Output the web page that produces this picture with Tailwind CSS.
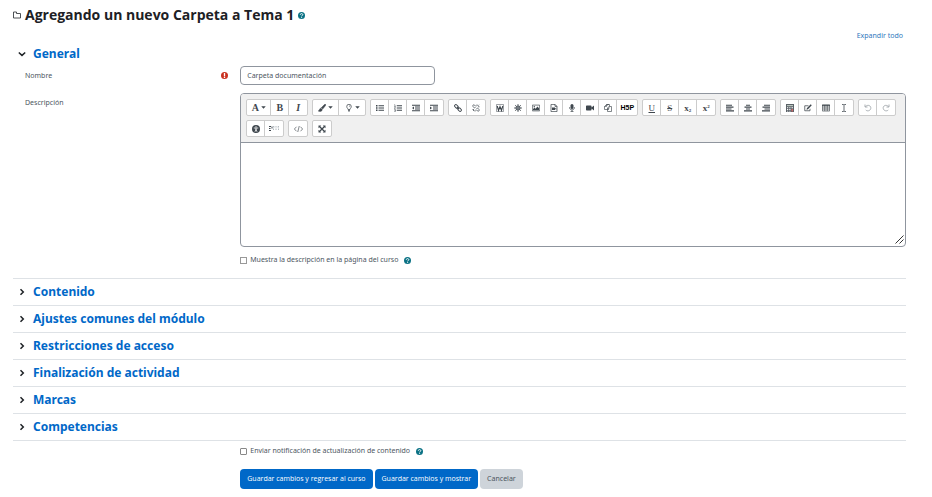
<!DOCTYPE html>
<html lang="es">
<head>
<meta charset="utf-8">
<title>Agregando un nuevo Carpeta a Tema 1</title>
<script src="https://cdn.jsdelivr.net/npm/@tailwindcss/browser@4"></script>
</head>
<body class="bg-white font-['Noto_Sans','Open_Sans',sans-serif] text-[7px] leading-3 text-[#4c5661]">
<svg class="hidden">
  <symbol id="help" viewBox="0 0 16 16"><circle cx="8" cy="8" r="8" fill="#0b7285"/><path d="M5.2 6.2C5.2 2.8 11 2.8 11 6.2 11 8.2 8.2 8 8.2 10" fill="none" stroke="#fff" stroke-width="2.2"/><path d="M7 11.2h2.4v2.2H7z" fill="#fff"/></symbol>
  <symbol id="right" viewBox="0 0 8 8"><path d="M2.5 1.2 5.3 4 2.5 6.8" fill="none" stroke="#1d2125" stroke-width="1.5"/></symbol>
  <symbol id="down" viewBox="0 0 8 8"><path d="M.8 2.5 4 5.4 7.2 2.5" fill="none" stroke="#1d2125" stroke-width="1.5"/></symbol>
  <symbol id="caret" viewBox="0 0 6 4"><path d="M0 .3h6L3 3.7z" fill="currentColor"/></symbol>
  <symbol id="brush" viewBox="0 0 16 16"><path d="M15 .5c1 .8.8 1.700 0 2.700L9.500 10 6.500 7.500 13 1C13.700.3 14.400 0 15 .5zM5.500 8.500l3 2.500c0 4-4.500 5-8 3 2.500-.5 2-5 5-5.500z" fill="currentColor" stroke="currentColor"/></symbol>
  <symbol id="bulb" viewBox="0 0 16 16"><path d="M6 11C6 9 3.500 8 3.500 5a4.500 4.500 0 0 1 9 0c0 3-2.500 4-2.500 6zM6 13h4M7 15h2M8 3.500c1 0 1.500.5 1.500 1.500" fill="none" stroke="currentColor" stroke-width="1.500"/></symbol>
  <symbol id="ul" viewBox="0 0 16 16"><path d="M0 2h3v3H0zM0 6.500h3v3H0zM0 11h3v3H0zM5 2.500h11v2H5zM5 7h11v2H5zM5 11.500h11v2H5z" fill="currentColor"/></symbol>
  <symbol id="ol" viewBox="0 0 16 16"><path d="M5.500 2.500H16v2H5.500zM5.500 7H16v2H5.500zM5.500 11.500H16v2H5.500z" fill="currentColor"/><path d="M.5 1.500H2V5M.5 5h3M.5 6.700h2.300L.8 9.300h2.500M.5 11h2.400v4H.5M1 13h2" fill="none" stroke="currentColor"/></symbol>
  <symbol id="indent" viewBox="0 0 16 16"><path d="M0 1.500h16v2H0zM6 5.200h10v2H6zM6 8.900h10v2H6zM0 12.600h16v2H0zM0 5l4 3-4 3z" fill="currentColor"/></symbol>
  <symbol id="outdent" viewBox="0 0 16 16"><path d="M0 1.500h16v2H0zM6 5.200h10v2H6zM6 8.900h10v2H6zM0 12.600h16v2H0zM4 5 0 8l4 3z" fill="currentColor"/></symbol>
  <symbol id="link" viewBox="0 0 16 16"><g fill="none" stroke="currentColor" stroke-width="2" transform="rotate(45 8 8)"><rect x="-.5" y="5.500" width="8" height="5" rx="2.500"/><rect x="8.500" y="5.500" width="8" height="5" rx="2.500"/><path d="M5 8h6"/></g></symbol>
  <symbol id="unlink" viewBox="0 0 16 16"><g fill="none" stroke="currentColor" stroke-width="1.500"><path d="m8 5-3-3C3 .5.500 3 2 5l3 3 2-1M8 11l3 3c2 1.500 4.500-1 3-3l-3-3-2 1M10 1v3M12 5.500h3M1 11h3M6 12v3M12 3.500l2-2M2 14l2-2"/></g></symbol>
  <symbol id="word" viewBox="0 0 16 16"><path d="M1 1h14v14H1z" fill="none" stroke="currentColor"/><path d="m2.500 4 2.500 9 3-8 3 8 2.500-9" fill="none" stroke="currentColor" stroke-width="2.200"/></symbol>
  <symbol id="burst" viewBox="0 0 16 16"><path d="M8 0v16M0 8h16M2.300 2.300l11.400 11.400M13.700 2.300 2.300 13.700" stroke="currentColor" stroke-width="1.600"/><circle cx="8" cy="8" r="4.500" fill="#777e84" stroke="currentColor"/></symbol>
  <symbol id="image" viewBox="0 0 16 16"><path d="M.7 2.200h14.600v11.600H.7z" fill="none" stroke="currentColor" stroke-width="1.400"/><circle cx="4.500" cy="5.500" r="1.500" fill="currentColor"/><path d="M2 12.500V10l3-2.500 2 2L11 5l3 3.500v4z" fill="currentColor"/></symbol>
  <symbol id="file" viewBox="0 0 16 16"><path d="M2 .8h8l4 4v10.400H2zM10 .8v4h4" fill="none" stroke="currentColor" stroke-width="1.500"/><path d="M4 7h6v5H4zM10 9.500 12.500 7v5z" fill="currentColor"/></symbol>
  <symbol id="mic" viewBox="0 0 16 16"><rect x="5" y="0" width="6" height="10" rx="3" fill="currentColor"/><path d="M3 6.500c0 7 10 7 10 0M8 12v3M5 15.200h6" fill="none" stroke="currentColor" stroke-width="1.500"/></symbol>
  <symbol id="video" viewBox="0 0 16 16"><path d="M0 4.500A1.500 1.500 0 0 1 1.500 3h8A1.500 1.500 0 0 1 11 4.500v7A1.500 1.500 0 0 1 9.500 13h-8A1.500 1.500 0 0 1 0 11.500zM11 7l5-4v10l-5-4z" fill="currentColor"/></symbol>
  <symbol id="copy" viewBox="0 0 16 16"><path d="M6 4V1h5v3M10 11H1V5l4-4h5M5 1v4H1M7 15V8l3-3h5v10zM10 5v4H7" fill="none" stroke="currentColor" stroke-width="1.300"/></symbol>
  <symbol id="aleft" viewBox="0 0 16 16"><path d="M0 1.500h12v2.200H0zM0 5.200h15v2.200H0zM0 8.900h11v2.200H0zM0 12.600h16v2.200H0z" fill="currentColor"/></symbol>
  <symbol id="acenter" viewBox="0 0 16 16"><path d="M4 1.500h8v2.200H4zM1 5.200h14v2.200H1zM4 8.900h8v2.200H4zM0 12.600h16v2.200H0z" fill="currentColor"/></symbol>
  <symbol id="aright" viewBox="0 0 16 16"><path d="M4 1.500h12v2.200H4zM1 5.200h15v2.200H1zM5 8.900h11v2.200H5zM0 12.600h16v2.200H0z" fill="currentColor"/></symbol>
  <symbol id="calc" viewBox="0 0 16 16"><path d="M0 0h16v16H0z" fill="#5b6268"/><path d="M2 2h12v2.500H2z" fill="#b9c4bd"/><path d="M2 6.500h2.500v2H2zM6.500 6.500H9v2H6.500zM11 6.500h3v2h-3zM2 10h2.500v2H2zM6.500 10H9v2H6.500zM2 13.500h2.500v1.500H2zM6.500 13.500H9v1.500H6.500z" fill="#fff"/><path d="M11 10h3v5h-3z" fill="#c66"/></symbol>
  <symbol id="edit" viewBox="0 0 16 16"><path d="M12 9.500v4H1.500v-10H9" fill="none" stroke="currentColor" stroke-width="1.500"/><path d="m13.500.5 2 2-7.500 8L5 11.500l.7-3z" fill="currentColor"/></symbol>
  <symbol id="table" viewBox="0 0 16 16"><path d="M.7 2h14.600v12H.7zM.7 6h14.600M.7 10h14.600M5.500 2v12M10.500 2v12" fill="none" stroke="currentColor" stroke-width="1.400"/><path d="M0 1.500h16v2H0z" fill="currentColor"/></symbol>
  <symbol id="ibeam" viewBox="0 0 16 16"><path d="M4 1h3l1 1 1-1h3M8 2v12M4 15h3l1-1 1 1h3" fill="none" stroke="currentColor" stroke-width="1.600"/></symbol>
  <symbol id="undo" viewBox="0 0 16 16"><path d="M2 1v5h5M2.500 5.500C8 0 14.500 3.500 13.500 9c-1 5-7 6-10 3" fill="none" stroke="currentColor" stroke-width="1.800"/></symbol>
  <symbol id="redo" viewBox="0 0 16 16"><path d="M14 1v5H9M13.500 5.500C8 0 1.500 3.500 2.500 9c1 5 7 6 10 3" fill="none" stroke="currentColor" stroke-width="1.800"/></symbol>
  <symbol id="access" viewBox="0 0 16 16"><circle cx="8" cy="8" r="8" fill="currentColor"/><circle cx="8" cy="3.700" r="1.400" fill="#fff"/><path d="M3.500 6h9M8 6v4M8 9l-2 4.500M8 9l2 4.500" stroke="#fff" stroke-width="1.600"/></symbol>
  <symbol id="reader" viewBox="0 0 22 16"><path d="M1 3h4M1 7h3M1 11h4M7 3v4" stroke="currentColor" stroke-width="2"/><path d="M10 2v9M15 2v9M20 2v9M12 4h1M17 4h1" stroke="#aab2b9" stroke-width="1.800" stroke-dasharray="2 1"/></symbol>
  <symbol id="code" viewBox="0 0 18 16"><path d="M5 3.500.8 8 5 12.500M13 3.500 17.200 8 13 12.500M10.500 2l-3 12" fill="none" stroke="currentColor" stroke-width="1.300"/></symbol>
  <symbol id="expand" viewBox="0 0 16 16"><path d="M1 1h5.500L1 6.500zM15 1v5.500L9.500 1zM1 15V9.500L6.500 15zM15 15H9.500L15 9.500z" fill="currentColor"/><path d="m3 3 10 10M13 3 3 13" stroke="currentColor" stroke-width="2.500"/></symbol>
</svg>

<main class="pl-[13px] pr-[26px] pt-[5px]">
  <header class="flex h-5 items-center">
    <svg class="mr-1 size-2" viewBox="0 0 16 16"><path d="M1 14V2h6v3h8v9z" fill="none" stroke="#3a3f44" stroke-width="1.800"/></svg>
    <h1 class="font-['Open_Sans',sans-serif] text-[14px] font-bold text-[#1d2125]">Agregando un nuevo Carpeta a Tema 1</h1>
    <button aria-label="Ayuda" class="ml-1"><svg class="size-[7px]"><use href="#help"/></svg></button>
  </header>
  <div class="mt-[5px] pr-[3px] text-right"><a href="#" class="text-[#2f78bd]">Expandir todo</a></div>

  <form>
    <section class="pb-3">
      <h2 class="flex h-[23px] items-center pl-[5px] text-[12px] font-bold text-[#0068c8]"><button type="button" class="flex items-center gap-[7px]"><svg class="size-2"><use href="#down"/></svg>General</button></h2>
      <div class="mt-px flex items-center">
        <div class="flex w-1/4 items-center justify-between pl-3 pr-2"><label for="name">Nombre</label>
          <svg class="size-[7px]" viewBox="0 0 16 16"><circle cx="8" cy="8" r="8" fill="#ca3120"/><path d="M6.500 2.500h3v7h-3zM6.500 11h3v2.500h-3z" fill="#fff"/></svg></div>
        <div class="flex flex-1 pl-1"><input id="name" value="Carpeta documentación" class="h-[19px] w-[195px] rounded-[4px] border border-[#8f959e] px-1.5 outline-none"></div>
      </div>
      <div class="mt-2 flex">
        <div class="w-1/4 pl-3 pt-1"><label for="desc">Descripción</label></div>
        <div class="min-w-0 flex-1 pl-1">
          <div class="overflow-hidden rounded-[4px] border border-[#8f959e]">
            <div class="flex flex-wrap gap-1 border-b border-[#8f959e] bg-[#f0f0f0] p-[5px] text-[#3f474e] [&>div]:flex [&>div]:h-[17px] [&>div]:divide-x [&>div]:divide-[#ccc] [&>div]:rounded-[2px] [&>div]:border [&>div]:border-[#ccc] [&>div]:bg-white [&_button]:flex [&_button]:w-[18px] [&_button]:items-center [&_button]:justify-center [&_svg]:size-2">
              <div class="font-['Liberation_Serif',serif] text-[10px]">
                <button type="button" aria-label="Estilos" class="min-w-[24px] gap-0.5 font-bold">A<svg class="max-h-[3px] max-w-[5px]"><use href="#caret"/></svg></button>
                <button type="button" class="font-bold">B</button>
                <button type="button" class="font-bold italic">I</button>
              </div>
              <div>
                <button type="button" aria-label="Color" class="min-w-[26px] gap-0.5"><svg><use href="#brush"/></svg><svg class="max-h-[3px] max-w-[5px]"><use href="#caret"/></svg></button>
                <button type="button" aria-label="Fondo" class="min-w-[26px] gap-0.5"><svg><use href="#bulb"/></svg><svg class="max-h-[3px] max-w-[5px]"><use href="#caret"/></svg></button>
              </div>
              <div>
                <button type="button" aria-label="Viñetas"><svg><use href="#ul"/></svg></button>
                <button type="button" aria-label="Numeración"><svg><use href="#ol"/></svg></button>
                <button type="button" aria-label="Reducir sangría"><svg><use href="#outdent"/></svg></button>
                <button type="button" aria-label="Aumentar sangría"><svg><use href="#indent"/></svg></button>
              </div>
              <div>
                <button type="button" aria-label="Enlace"><svg><use href="#link"/></svg></button>
                <button type="button" aria-label="Quitar enlace"><svg><use href="#unlink"/></svg></button>
              </div>
              <div>
                <button type="button" aria-label="Word"><svg><use href="#word"/></svg></button>
                <button type="button" aria-label="Emoji"><svg><use href="#burst"/></svg></button>
                <button type="button" aria-label="Imagen"><svg><use href="#image"/></svg></button>
                <button type="button" aria-label="Multimedia"><svg><use href="#file"/></svg></button>
                <button type="button" aria-label="Grabar audio"><svg><use href="#mic"/></svg></button>
                <button type="button" aria-label="Grabar video"><svg><use href="#video"/></svg></button>
                <button type="button" aria-label="Archivos"><svg><use href="#copy"/></svg></button>
                <button type="button" class="min-w-[20px] font-['Liberation_Sans',sans-serif] text-[7px] font-bold text-black">H5P</button>
              </div>
              <div class="font-['Liberation_Serif',serif] text-[9px] [&_sub]:text-[5px] [&_sup]:text-[5px]">
                <button type="button" class="underline">U</button>
                <button type="button" class="line-through">S</button>
                <button type="button" aria-label="Subíndice" class="font-bold"><span>x<sub>2</sub></span></button>
                <button type="button" aria-label="Superíndice" class="font-bold"><span>x<sup>2</sup></span></button>
              </div>
              <div>
                <button type="button" aria-label="Izquierda"><svg><use href="#aleft"/></svg></button>
                <button type="button" aria-label="Centro"><svg><use href="#acenter"/></svg></button>
                <button type="button" aria-label="Derecha"><svg><use href="#aright"/></svg></button>
              </div>
              <div>
                <button type="button" aria-label="Ecuación"><svg><use href="#calc"/></svg></button>
                <button type="button" aria-label="Carácter"><svg><use href="#edit"/></svg></button>
                <button type="button" aria-label="Tabla"><svg><use href="#table"/></svg></button>
                <button type="button" aria-label="Limpiar"><svg><use href="#ibeam"/></svg></button>
              </div>
              <div class="text-[#a3a8ad]">
                <button type="button" aria-label="Deshacer"><svg><use href="#undo"/></svg></button>
                <button type="button" aria-label="Rehacer"><svg><use href="#redo"/></svg></button>
              </div>
              <div>
                <button type="button" aria-label="Accesibilidad"><svg><use href="#access"/></svg></button>
                <button type="button" aria-label="Lector"><svg class="min-w-[12px]"><use href="#reader"/></svg></button>
              </div>
              <div><button type="button" aria-label="HTML"><svg class="min-w-[9px]"><use href="#code"/></svg></button></div>
              <div><button type="button" aria-label="Pantalla completa"><svg><use href="#expand"/></svg></button></div>
            </div>
            <div class="relative"><textarea id="desc" class="block h-[103px] w-full resize-none p-1 outline-none"></textarea>
              <svg class="pointer-events-none absolute bottom-0.5 right-px size-[9px]" viewBox="0 0 9 9"><path d="M.5 8.500l8-8M4.500 8.500l4-4" stroke="#333"/></svg></div>
          </div>
          <div class="mt-[7px] flex items-center"><input id="show" type="checkbox" class="mr-[3px] size-[7px] appearance-none border border-[#999]"><label for="show">Muestra la descripción en la página del curso</label><button type="button" aria-label="Ayuda" class="ml-[6px]"><svg class="size-[7px]"><use href="#help"/></svg></button></div>
        </div>
      </div>
    </section>

    <div class="border-b border-[#dee2e6] text-[12px] font-bold text-[#0068c8] [&>h2]:flex [&>h2]:h-[27px] [&>h2]:items-center [&>h2]:border-t [&>h2]:border-[#dee2e6] [&>h2]:pl-[5px] [&_button]:flex [&_button]:items-center [&_button]:gap-[7px] [&_svg]:size-2">
      <h2><button type="button"><svg><use href="#right"/></svg>Contenido</button></h2>
      <h2><button type="button"><svg><use href="#right"/></svg>Ajustes comunes del módulo</button></h2>
      <h2><button type="button"><svg><use href="#right"/></svg>Restricciones de acceso</button></h2>
      <h2><button type="button"><svg><use href="#right"/></svg>Finalización de actividad</button></h2>
      <h2><button type="button"><svg><use href="#right"/></svg>Marcas</button></h2>
      <h2><button type="button"><svg><use href="#right"/></svg>Competencias</button></h2>
    </div>

    <div class="ml-[25%] pl-1">
      <div class="mt-1 flex items-center"><input id="notify" type="checkbox" class="mr-[3px] size-[7px] appearance-none rounded-[1px] border border-[#888]"><label for="notify">Enviar notificación de actualización de contenido</label><button type="button" aria-label="Ayuda" class="ml-[6px]"><svg class="size-[7px]"><use href="#help"/></svg></button></div>
      <div class="mt-3 flex gap-0.5 [&>button]:h-5 [&>button]:rounded-[4px] [&>button]:px-[7px]">
        <button class="bg-[#0068c8] font-['Open_Sans',sans-serif] font-medium text-white">Guardar cambios y regresar al curso</button>
        <button class="bg-[#0068c8] font-['Open_Sans',sans-serif] font-medium text-white">Guardar cambios y mostrar</button>
        <button type="button" class="bg-[#ced4da]">Cancelar</button>
      </div>
    </div>
  </form>
</main>
</body>
</html>
